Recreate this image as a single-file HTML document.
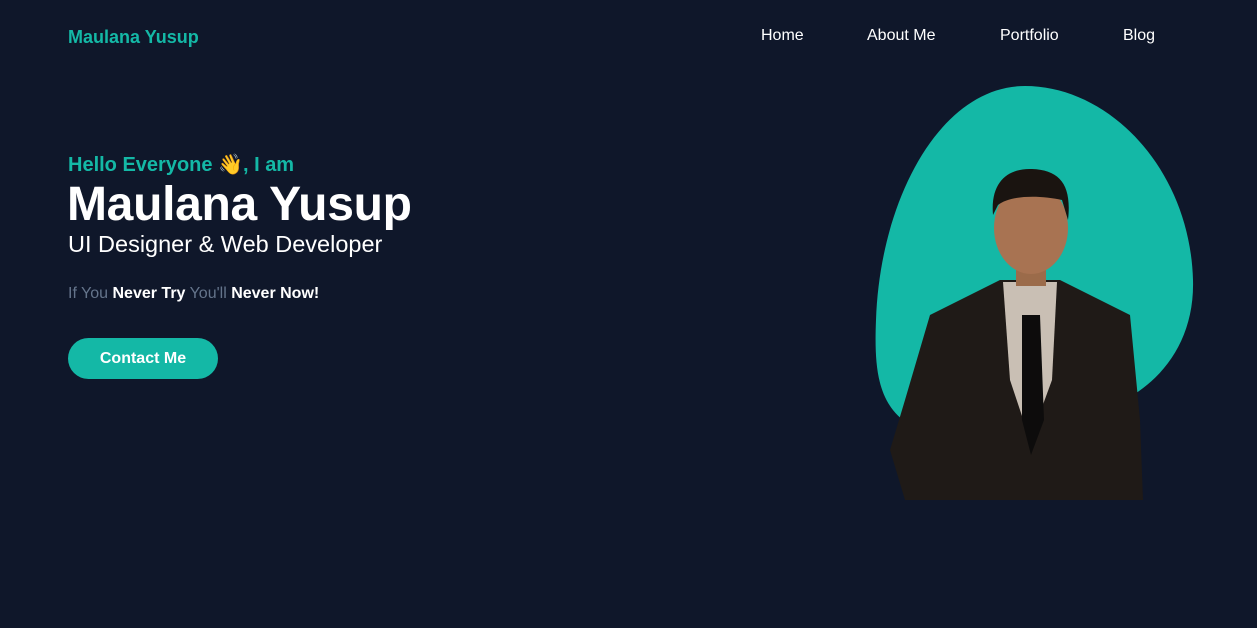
<!DOCTYPE html>
<html><head><meta charset="utf-8"><style>
*{margin:0;padding:0;box-sizing:border-box}
body{width:1257px;height:628px;background:#0f172a;font-family:"Liberation Sans",Arial,sans-serif;position:relative;overflow:hidden}
.logo{position:absolute;left:68px;top:27px;color:#14b8a6;font-weight:bold;font-size:18px}
.nav a{position:absolute;top:27px;color:#fff;font-size:16px;text-decoration:none}
.hello{position:absolute;left:68px;top:152px;color:#14b8a6;font-weight:bold;font-size:20px}
h1{position:absolute;left:67px;top:177px;color:#fff;font-size:48px;font-weight:bold;letter-spacing:-0.3px}
.sub{position:absolute;left:68px;top:231px;color:#fff;font-size:23.5px}
.q{position:absolute;left:68px;top:285px;color:#64748b;font-size:16px}
.q b{color:#fff}
.btn{position:absolute;left:68px;top:338px;width:150px;height:41px;border-radius:21px;background:#14b8a6;color:#fff;font-weight:bold;font-size:16px;text-align:center;line-height:41px}
svg{position:absolute;left:0;top:0}
</style></head><body>
<div class="logo">Maulana Yusup</div>
<div class="nav"><a style="left:761px">Home</a><a style="left:867px">About Me</a><a style="left:1000px">Portfolio</a><a style="left:1123px">Blog</a></div>
<div class="hello">Hello Everyone 👋, I am</div>
<h1>Maulana Yusup</h1>
<div class="sub">UI Designer &amp; Web Developer</div>
<div class="q">If You <b>Never Try</b> You'll <b>Never Now!</b></div>
<div class="btn">Contact Me</div>
<svg width="1257" height="628">
<path d="M1025 86 C1110 86 1190 170 1193 280 C1195 350 1150 395 1100 410 L1000 440 C960 440 930 440 910 425 C878 405 874 370 876 320 C880 200 940 86 1025 86 Z" fill="#14b8a6"/>
<path d="M1000 280 L1060 280 L1130 315 L1140 420 L1143 500 L905 500 L890 450 L905 400 L930 315 Z" fill="#1f1a17"/>
<path d="M1003 282 L1057 282 L1052 380 L1030 440 L1010 380 Z" fill="#c9bfb4"/>
<path d="M1022 315 L1040 315 L1044 420 L1031 455 L1022 420 Z" fill="#0d0c0c"/>
<rect x="1016" y="258" width="30" height="28" fill="#9b6b4a"/>
<ellipse cx="1031" cy="228" rx="37" ry="46" fill="#a87352"/>
<path d="M993 215 C990 180 1010 168 1032 169 C1060 170 1072 185 1068 220 L1062 200 C1040 195 1010 195 998 205 Z" fill="#1a1410"/>
</svg>
</body></html>
